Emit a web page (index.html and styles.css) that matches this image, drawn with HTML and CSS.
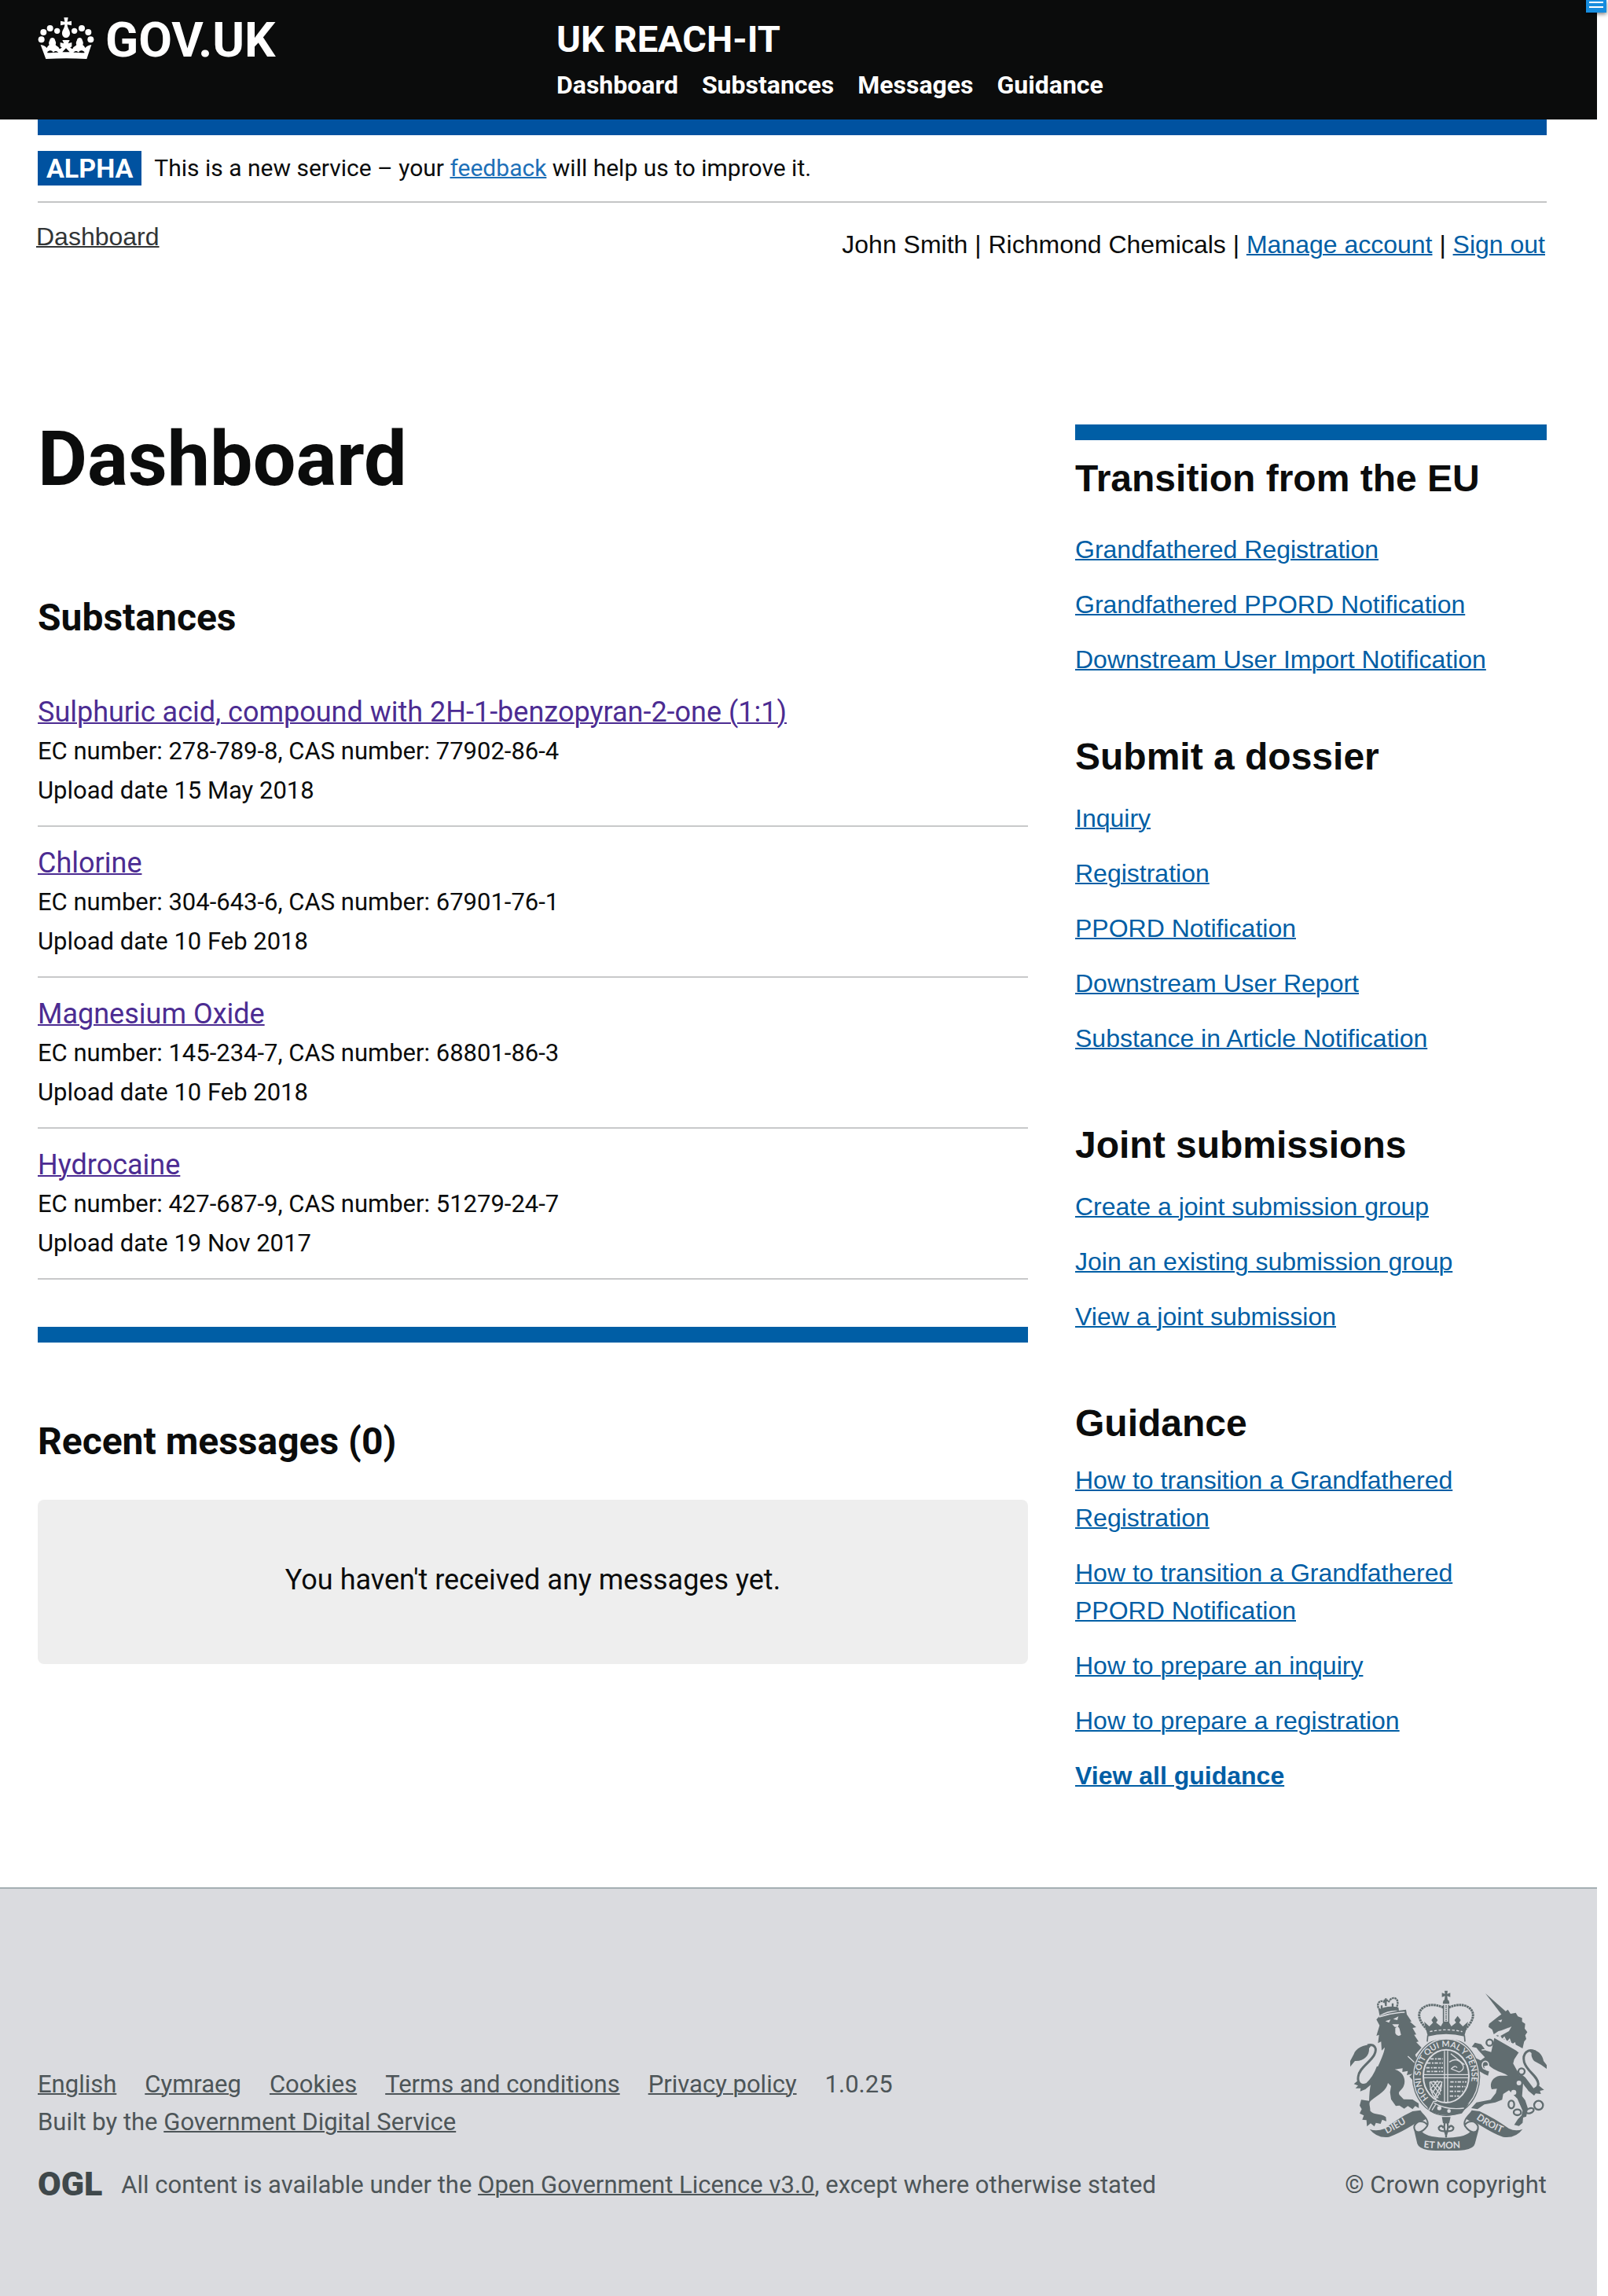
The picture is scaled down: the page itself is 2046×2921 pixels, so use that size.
FILE: index.html
```html
<!DOCTYPE html>
<html lang="en">
<head>
<meta charset="utf-8">
<meta name="viewport" content="width=device-width, initial-scale=1">
<title>Dashboard – UK REACH-IT</title>
<link rel="stylesheet" href="styles.css">
</head>
<body>
<button class="menu-button" type="button" aria-label="Menu"><span class="menu-line"></span><span class="menu-line"></span></button>
<div class="page">
  <header class="header">
    <a class="logo" href="#">
      <svg class="logo-crown" viewBox="24 19 216 159" aria-hidden="true">
        <g fill="#fff">
          <circle cx="38" cy="104" r="12"/><circle cx="46" cy="76" r="12"/><circle cx="71" cy="61" r="12"/><circle cx="98" cy="71" r="11"/>
          <circle cx="164" cy="71" r="11"/><circle cx="192" cy="61" r="12"/><circle cx="217" cy="76" r="12"/><circle cx="226" cy="104" r="12"/>
          <path d="M124 20h16l-3 16 16-3v17l-16-3c0 14 10 20 10 34 0 9-7 16-15 16s-15-7-15-16c0-14 10-20 10-34l-16 3V33l16 3z"/>
          <path fill-rule="evenodd" d="M35 124c10 1 18 5 24 12 2-8 8-9 9-12-4-9 1-14 2-18 0-6 6-9 10-9s10 3 10 9c1 4 6 9 2 18 2 5 12 6 14 14 4 2 8-1 10-4l-6-3v-16l14 4-6-13h28l-6 13 14-4v16l-6 3c2 3 6 6 10 4 2-8 12-9 14-14-4-9 1-14 2-18 0-6 6-9 10-9s10 3 10 9c1 4 6 9 2 18 1 3 7 4 9 12 6-7 14-11 24-12l-18 54c-52-3-104-3-156 0zM61 155c13-1 28-2 42-2-8-8-14-6-20 0-4-9-14-10-22-2zm141 0c-13-1-28-2-42-2 8-8 14-6 20 0 4-9 14-10 22-2zm-84-3h28l-14-15z"/>
        </g>
      </svg>
      <span class="logo-text">GOV.UK</span>
    </a>
    <div class="service">
      <a class="service-name" href="#">UK REACH-IT</a>
      <nav class="service-nav" aria-label="Main">
        <a href="#">Dashboard</a>
        <a href="#">Substances</a>
        <a href="#">Messages</a>
        <a href="#">Guidance</a>
      </nav>
    </div>
  </header>

  <div class="container">
    <div class="phase-banner">
      <strong class="phase-tag">ALPHA</strong>
      <span>This is a new service – your <a class="link" href="#">feedback</a> will help us to improve it.</span>
    </div>
    <div class="account-row">
      <nav aria-label="Breadcrumb"><a class="crumb" href="#">Dashboard</a></nav>
      <div class="account">John Smith | Richmond Chemicals | <a class="link" href="#">Manage account</a> | <a class="link" href="#">Sign out</a></div>
    </div>

    <div class="columns">
      <main>
        <h1 class="title">Dashboard</h1>
        <h2 class="heading heading-substances">Substances</h2>
        <ul class="substances">
          <li class="substance"><a class="substance-link" href="#">Sulphuric acid, compound with 2H-1-benzopyran-2-one (1:1)</a><p>EC number: 278-789-8, CAS number: 77902-86-4</p><p>Upload date 15 May 2018</p></li>
          <li class="substance"><a class="substance-link" href="#">Chlorine</a><p>EC number: 304-643-6, CAS number: 67901-76-1</p><p>Upload date 10 Feb 2018</p></li>
          <li class="substance"><a class="substance-link" href="#">Magnesium Oxide</a><p>EC number: 145-234-7, CAS number: 68801-86-3</p><p>Upload date 10 Feb 2018</p></li>
          <li class="substance"><a class="substance-link" href="#">Hydrocaine</a><p>EC number: 427-687-9, CAS number: 51279-24-7</p><p>Upload date 19 Nov 2017</p></li>
        </ul>
        <section class="messages">
          <h2 class="heading">Recent messages (0)</h2>
          <p class="messages-empty">You haven't received any messages yet.</p>
        </section>
      </main>

      <aside class="sidebar">
        <section class="group group-transition">
          <h2>Transition from the EU</h2>
          <ul>
            <li><a class="link" href="#">Grandfathered Registration</a></li>
            <li><a class="link" href="#">Grandfathered PPORD Notification</a></li>
            <li><a class="link" href="#">Downstream User Import Notification</a></li>
          </ul>
        </section>
        <section class="group">
          <h2>Submit a dossier</h2>
          <ul>
            <li><a class="link" href="#">Inquiry</a></li>
            <li><a class="link" href="#">Registration</a></li>
            <li><a class="link" href="#">PPORD Notification</a></li>
            <li><a class="link" href="#">Downstream User Report</a></li>
            <li><a class="link" href="#">Substance in Article Notification</a></li>
          </ul>
        </section>
        <section class="group">
          <h2>Joint submissions</h2>
          <ul>
            <li><a class="link" href="#">Create a joint submission group</a></li>
            <li><a class="link" href="#">Join an existing submission group</a></li>
            <li><a class="link" href="#">View a joint submission</a></li>
          </ul>
        </section>
        <section class="group group-guidance">
          <h2>Guidance</h2>
          <ul>
            <li><a class="link" href="#">How to transition a Grandfathered Registration</a></li>
            <li><a class="link" href="#">How to transition a Grandfathered PPORD Notification</a></li>
            <li><a class="link" href="#">How to prepare an inquiry</a></li>
            <li><a class="link" href="#">How to prepare a registration</a></li>
            <li><a class="link link-strong" href="#">View all guidance</a></li>
          </ul>
        </section>
      </aside>
    </div>
  </div>

  <footer class="footer">
    <div>
      <ul class="footer-links">
        <li><a href="#">English</a></li>
        <li><a href="#">Cymraeg</a></li>
        <li><a href="#">Cookies</a></li>
        <li><a href="#">Terms and conditions</a></li>
        <li><a href="#">Privacy policy</a></li>
        <li>1.0.25</li>
      </ul>
      <p>Built by the <a href="#">Government Digital Service</a></p>
      <div class="licence">
        <span class="ogl">OGL</span>
        <p>All content is available under the <a href="#">Open Government Licence v3.0</a>, except where otherwise stated</p>
      </div>
    </div>
    <div class="copyright">
      <svg class="crest" viewBox="84 66 750 612" role="img" aria-label="Royal coat of arms">
        <defs>
          <path id="garter-path" d="M384 477A97 112 0 0 1 353 394A97 112 0 0 1 547 394A97 112 0 0 1 498 492"/>
          <path id="dieu-path" d="M224 614Q270 590 330 554"/>
          <path id="droit-path" d="M564 556Q622 600 700 624"/>
          <path id="mon-path" d="M364 666Q450 676 545 664"/>
        </defs>
        <!-- lion -->
        <g class="ink">
          <path d="M184 178L196 164Q245 145 297 140L300 158L318 185L312 186L336 207L322 210L336 235L328 236L345 262L336 264L356 285L332 312L345 345L352 412L330 418L310 395L322 385L300 390L304 374L283 378L284 364L254 368C288 378 298 408 288 432C280 450 264 452 272 466L288 482L322 483L345 498L346 516L332 508L322 520L304 508L290 518L272 506L258 508L240 482L236 455L240 432L228 420C222 450 196 462 162 488C152 498 162 512 160 526C172 544 196 534 220 550L222 566L206 560L200 576L182 572L176 586L162 574L148 586L146 562L130 560L136 544L120 536L128 520L120 506L126 484L156 488C158 440 162 405 184 370C200 335 214 305 216 284L204 296L202 262L190 268L194 236L184 240L196 200Z"/>
          <path d="M168 272C134 274 104 288 98 310L84 336V358L102 336C136 338 158 316 156 288Z"/>
          <path d="M112 412L98 424L114 430L104 440L124 440L122 452L142 444L168 422L176 400L148 426Q120 426 112 412Z"/>
          <path d="M192 140Q228 122 268 132L270 144Q232 140 196 162Z"/>
        </g>
        <path class="line" stroke-width="9" d="M150 276C178 270 188 288 176 312C162 340 116 364 114 398C112 422 126 434 148 424Q176 398 190 358"/>
        <g class="line" stroke-width="7">
          <path stroke-dasharray="8 2" d="M198 142C176 120 202 92 220 118M230 112C244 82 278 96 260 134"/>
          <path d="M220 97V126M212 105H228M204 124V136M246 116V132"/>
        </g>
        <path class="paper" d="M218 184L238 178L232 190ZM248 176L268 166L264 180ZM244 196L270 196L266 206L254 206ZM256 210Q268 202 272 212L278 236Q264 246 256 230Z"/>
        <path class="paper-line" stroke-width="4" d="M194 168Q240 152 292 150M304 318L340 352"/>
        <!-- unicorn -->
        <g class="ink">
          <path d="M600 78L684 152L664 162Z"/>
          <path d="M664 156L686 140L696 156L716 152L724 166L740 172L740 186L752 194L750 212L760 226L752 238L756 252L748 262L742 288L720 276L650 244L640 240C656 232 672 228 690 208C676 214 664 220 650 222L632 234L626 216L612 206L614 194L650 166Z"/>
          <path d="M634 248L728 302L710 330L706 346C722 376 736 396 744 420L740 470L752 486L762 516L756 548L744 552L742 572L728 584L710 580L724 558L738 544L742 526L722 480L704 462L690 448L668 462L664 484L638 494L596 502L570 520L546 516L566 494L620 484L640 458L644 442L624 444C614 420 628 396 656 392L686 392C660 376 640 378 612 352L594 356L602 372L614 376L610 392L596 386L556 362L544 344L556 322L582 334L598 322L574 296L566 286L548 282L560 266L584 272L602 296L622 302Z"/>
          <path d="M762 294C790 286 818 306 822 336L834 352V366L812 350L786 336Q774 322 776 306Z"/>
          <path d="M802 428L824 446L808 450L812 462L792 460L786 468L764 450L748 426L722 376L752 398L784 440Z"/>
        </g>
        <path class="line" stroke-width="9" d="M790 300C762 286 740 308 748 340C758 376 800 392 802 424Q798 450 776 448Q752 438 736 396"/>
        <g class="line" stroke-width="7">
          <circle cx="616" cy="266" r="12"/><circle cx="738" cy="376" r="12"/><ellipse cx="699" cy="502" rx="11" ry="15"/><ellipse cx="722" cy="532" rx="14" ry="11"/><ellipse cx="770" cy="526" rx="15" ry="9" transform="rotate(-20 770 526)"/><circle cx="803" cy="505" r="17"/>
        </g>
        <g class="paper-line" stroke-width="5">
          <ellipse cx="600" cy="352" rx="12" ry="15"/><path d="M586 294L606 292L606 280M640 242Q690 262 728 302M648 250L654 238L664 256L672 246L682 266L692 254L700 276L712 268L716 288L730 284"/>
        </g>
        <path class="paper" d="M648 182L664 178L660 188ZM672 218L700 204L690 222L658 240L644 238Z"/>
        <circle class="paper" cx="728" cy="420" r="9"/><circle class="paper" cx="708" cy="456" r="10"/>
        <!-- imperial crown -->
        <path class="ink" d="M444 68H456L454 80L466 76V92L454 88L456 102Q464 106 462 118H438Q436 106 444 102L446 88L434 92V76L446 80Z"/>
        <g class="line">
          <path stroke-width="9" stroke-dasharray="8 2" d="M378 216C354 192 334 160 358 136C384 114 416 122 440 132M522 216C546 192 566 160 542 136C516 114 484 122 460 132"/>
          <path stroke-width="5" d="M440 122V188M460 122V188"/><path stroke-width="6" stroke-dasharray="4 3" d="M450 124V190"/>
        </g>
        <path class="ink" d="M366 186L386 204L400 190L394 180L406 164L418 180L412 190L430 204L440 186H460L470 204L488 190L482 180L494 164L506 180L500 190L514 204L534 186L526 218L520 240Q450 226 380 240L374 218Z"/>
        <!-- garter and shield -->
        <ellipse class="ink" cx="450" cy="396" rx="130" ry="150"/>
        <path class="paper" d="M376 240Q450 222 524 240L526 268Q450 236 374 268Z"/>
        <path class="line" stroke-width="5" d="M378 262L380 240Q450 222 520 240L522 262"/>
        <path class="paper-line" stroke-width="4" stroke-dasharray="10 7" d="M388 224Q450 210 512 224"/>
        <ellipse class="paper-line" stroke-width="4" cx="450" cy="396" rx="124" ry="144"/>
        <ellipse class="paper-line" stroke-width="6" cx="450" cy="394" rx="87" ry="101"/>
        <g class="paper-line" stroke-width="4">
          <path d="M444 298V492M456 298V492M366 388H534M366 400H534"/>
          <path stroke-width="5" stroke-dasharray="13 5 6 4" d="M390 328H438M378 344H438M374 362H438M376 376H438M466 416H528M464 434H524M464 452H514M464 470H500"/>
          <path d="M468 308L520 350M462 340Q490 320 510 346Q526 366 500 378L470 366Q484 350 492 362"/>
          <path d="M392 418L428 464M402 412L432 450M390 440L420 478M428 412L396 460M418 410L388 446M432 424L406 476M388 416H434Q432 456 410 480Q388 456 388 416"/>
        </g>
        <text class="garter"><textPath href="#garter-path">HONI SOIT QUI MAL Y PENSE</textPath></text>
        <path class="ink" d="M380 516L372 492L396 480L412 494L490 516L538 498L510 536Q450 552 392 530Z"/>
        <path class="paper-line" stroke-width="4" d="M384 524L402 490L414 490M404 496Q450 524 518 516M410 502L396 524"/>
        <circle class="paper" cx="424" cy="516" r="8"/><circle class="paper" cx="461" cy="527" r="7"/>
        <!-- pendant -->
        <path class="ink" d="M434 550H467L462 574L438 574Z"/>
        <path class="line" stroke-width="7" d="M450 564Q436 580 450 620Q464 580 450 564M442 604Q420 604 422 590Q432 576 440 592M458 604Q480 604 478 590Q468 576 460 592M436 604H464M450 606V628"/>
        <!-- motto ribbon -->
        <path class="ink" d="M158 596Q184 606 216 594Q270 552 322 528L352 524L374 556Q362 568 346 566Q270 614 232 626Q186 632 158 596Z"/>
        <path class="ink" d="M742 596Q716 606 690 594Q630 552 578 528L548 524L526 556Q538 568 556 566Q630 614 668 626Q716 632 742 596Z"/>
        <path class="line" stroke-width="6" d="M350 530Q388 562 378 584Q356 616 334 604Q318 582 344 568Q368 564 378 580M550 530Q512 562 522 584Q544 616 566 604Q582 582 556 568Q532 564 522 580"/>
        <path class="ink" d="M326 592Q336 612 358 606Q370 618 396 624Q450 634 504 624Q530 618 542 606Q564 612 576 592L560 652Q556 670 520 676Q450 682 380 676Q346 670 340 652Z"/>
        <g class="motto">
          <text><textPath href="#dieu-path">DIEU</textPath></text>
          <text><textPath href="#droit-path">DROIT</textPath></text>
          <text><textPath href="#mon-path">ET MON</textPath></text>
        </g>
      </svg>
      <p>© Crown copyright</p>
    </div>
  </footer>
</div>
</body>
</html>
```
FILE: styles.css
```css
* { box-sizing: border-box; }

body {
  margin: 0;
  background: #fff;
  color: #0b0c0c;
  font: 32px/48px "Liberation Sans", Arial, sans-serif;
}

h1, h2, p, ul { margin: 0; padding: 0; }
ul { list-style: none; }
a { color: inherit; text-decoration-thickness: 2px; }

.page { margin-right: 14px; }
.container { padding: 0 64px 0 48px; }
.link { color: #005ea5; }
.link-strong { font-weight: 700; }

.menu-button {
  position: absolute;
  top: 0;
  right: 2px;
  display: flex;
  flex-direction: column;
  gap: 4px;
  width: 26px;
  height: 16px;
  padding: 2px 4px;
  border: 0;
  background: #168cde;
  box-shadow: 0 2px 5px rgba(0, 0, 0, 0.5);
}
.menu-line { width: 18px; height: 2px; background: #fff; }

/* Header */
.header {
  display: grid;
  grid-template-columns: 660px 1fr;
  padding: 22px 48px 24px;
  background: #0b0c0c;
  color: #fff;
  font-family: Roboto, sans-serif;
  font-weight: 700;
}
.header a { text-decoration: none; }
.logo { display: flex; align-items: flex-start; gap: 14px; }
.logo-crown { width: 72px; height: 53px; }
.logo-text { font-size: 62px; line-height: 58px; }
.service-name { display: block; font-size: 47px; line-height: 56px; }
.service-nav { display: flex; gap: 30px; margin-top: 10px; line-height: 40px; }

/* Phase banner and account */
.phase-banner {
  display: flex;
  gap: 16px;
  padding: 20px 0;
  border-top: 20px solid #0052a0;
  border-bottom: 2px solid #c4c5c6;
  font: 30px/44px Roboto, sans-serif;
}
.phase-tag { padding: 0 11px; background: #0052a0; color: #fff; font-size: 34px; }
.phase-banner .link { color: #1d70b8; }
.account-row {
  display: flex;
  justify-content: space-between;
  margin: 0 2px 0 -2px;
  padding-top: 23px;
  line-height: 40px;
}
.crumb { color: #323536; }
.account { padding-top: 10px; }

/* Main columns */
.columns {
  display: grid;
  grid-template-columns: 21fr 10fr;
  gap: 60px;
  margin-top: 209px;
}
main { font-family: Roboto, sans-serif; }
.title { font-size: 97px; line-height: 88px; }
.heading { font-size: 48px; line-height: 56px; }
.heading-substances { margin: 130px 0 46px; }
.substance {
  padding: 21px 0 19px;
  border-bottom: 2px solid #c8c9ca;
  font-size: 31px;
  line-height: 50px;
}
.substance-link { display: block; width: fit-content; color: #4c2c92; font-size: 36px; }
.messages { margin-top: 60px; padding-top: 98px; border-top: 20px solid #005ea5; }
.messages-empty {
  margin-top: 46px;
  padding: 77px 20px 82px;
  border-radius: 8px;
  background: #eee;
  font-size: 36px;
  line-height: 50px;
  text-align: center;
}

/* Sidebar */
.sidebar { border-top: 20px solid #005ea5; }
.group { margin-top: 84px; }
.group h2 { margin-bottom: 26px; font-size: 48px; line-height: 56px; }
.group ul { display: grid; gap: 22px; }
.group-transition { margin-top: 21px; }
.group-transition h2 { margin-bottom: 38px; }
.group-transition + .group { margin-top: 72px; }
.group-guidance h2 { margin-bottom: 20px; }

/* Footer */
.footer {
  display: flex;
  justify-content: space-between;
  align-items: flex-end;
  margin-top: 118px;
  padding: 129px 64px 117px 48px;
  border-top: 2px solid #a5afb3;
  background: #dadbdf;
  color: #4d5558;
  font: 31px/48px Roboto, sans-serif;
}
.footer-links { display: flex; gap: 36px; }
.licence { display: flex; gap: 24px; margin-top: 32px; }
.ogl { color: #3f484b; font-size: 43px; font-weight: 900; line-height: 44px; }
.copyright { text-align: right; }
.crest { display: block; width: 250px; height: 204px; margin: 0 0 20px auto; }
.ink { fill: #616d70; }
.paper { fill: #dadbdf; }
.line { fill: none; stroke: #616d70; }
.paper-line { fill: none; stroke: #dadbdf; }
.garter, .motto { fill: #dadbdf; font-family: Lato, sans-serif; font-weight: 700; }
.garter { font-size: 32px; }
.motto { font-size: 36px; }
```
